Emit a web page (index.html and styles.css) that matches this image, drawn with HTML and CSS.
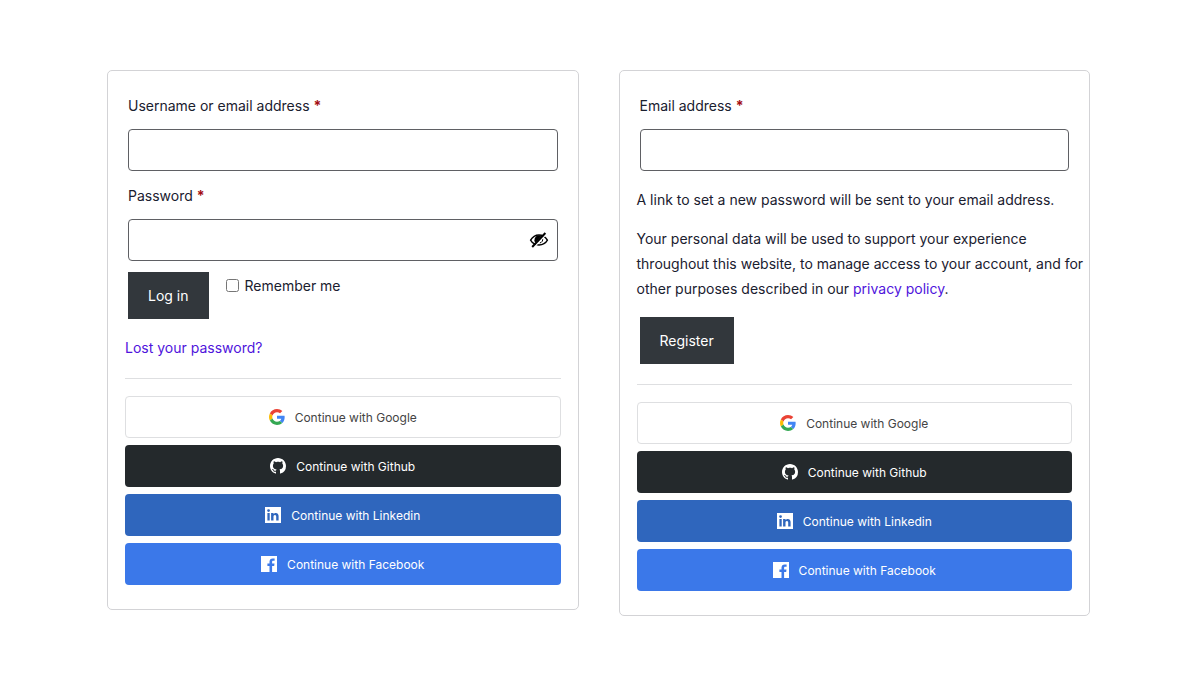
FILE: index.html
```html
<!DOCTYPE html>
<html lang="en">
<head>
    <meta charset="UTF-8">
    <meta name="viewport" content="width=device-width, initial-scale=1.0">
    <title>My account</title>
    <link rel="stylesheet" href="styles.css">
</head>
<body>
    <!-- Shared icons -->
    <svg class="icon-defs" aria-hidden="true">
        <symbol id="icon-google" viewBox="0 0 48 48">
            <path fill="#EA4335" d="M24 9.5c3.54 0 6.71 1.22 9.21 3.6l6.85-6.85C35.9 2.38 30.47 0 24 0 14.62 0 6.51 5.38 2.56 13.22l7.98 6.19C12.43 13.72 17.74 9.5 24 9.5z"/>
            <path fill="#4285F4" d="M46.98 24.55c0-1.57-.15-3.09-.38-4.55H24v9.02h12.94c-.58 2.96-2.26 5.48-4.78 7.18l7.73 6c4.51-4.18 7.09-10.36 7.09-17.65z"/>
            <path fill="#FBBC05" d="M10.53 28.59c-.48-1.45-.76-2.99-.76-4.59s.27-3.14.76-4.59l-7.98-6.19C.92 16.46 0 20.12 0 24c0 3.88.92 7.54 2.56 10.78l7.97-6.19z"/>
            <path fill="#34A853" d="M24 48c6.48 0 11.93-2.13 15.89-5.81l-7.73-6c-2.15 1.45-4.92 2.3-8.16 2.3-6.26 0-11.57-4.22-13.47-9.91l-7.98 6.19C6.51 42.62 14.62 48 24 48z"/>
        </symbol>
        <symbol id="icon-github" viewBox="0 0 16 16">
            <path fill="currentColor" d="M8 0C3.58 0 0 3.58 0 8c0 3.54 2.29 6.53 5.47 7.59.4.07.55-.17.55-.38 0-.19-.01-.82-.01-1.49-2.01.37-2.53-.49-2.69-.94-.09-.23-.48-.94-.82-1.13-.28-.15-.68-.52-.01-.53.63-.01 1.08.58 1.23.82.72 1.21 1.87.87 2.33.66.07-.52.28-.87.51-1.07-1.78-.2-3.64-.89-3.64-3.95 0-.87.31-1.59.82-2.15-.08-.2-.36-1.02.08-2.12 0 0 .67-.21 2.2.82.64-.18 1.32-.27 2-.27s1.36.09 2 .27c1.53-1.04 2.2-.82 2.2-.82.44 1.1.16 1.92.08 2.12.51.56.82 1.27.82 2.15 0 3.07-1.87 3.75-3.65 3.95.29.25.54.73.54 1.48 0 1.07-.01 1.93-.01 2.2 0 .21.15.46.55.38A8.01 8.01 0 0 0 16 8c0-4.42-3.58-8-8-8z"/>
        </symbol>
        <symbol id="icon-linkedin" viewBox="0 0 16 16">
            <path fill="currentColor" fill-rule="evenodd" d="M0 0h16v16H0zM2.4 6.1v7.5h2.3V6.1zM3.55 2.2a1.4 1.4 0 1 0 0 2.8 1.4 1.4 0 0 0 0-2.8zM6.1 6.1v7.5h2.4V9.8c0-1 .4-1.8 1.4-1.8s1.3.8 1.3 1.8v3.8h2.4V9.3c0-2.1-.8-3.4-2.8-3.4-1.2 0-1.9.6-2.3 1.2v-1z"/>
        </symbol>
        <symbol id="icon-facebook" viewBox="0 0 16 16">
            <path fill="currentColor" d="M0 0h16v16h-4.9V9.9h2.1l.3-2.5h-2.4V6c0-.7.2-1.2 1.2-1.2h1.3V2.5c-.2 0-1-.1-1.9-.1-1.9 0-3.2 1.2-3.2 3.3v1.7H6.4v2.5h2.1V16H0z"/>
        </symbol>
    </svg>

    <main class="account">
        <section class="card">
            <form>
                <div class="form-row">
                    <label for="username">Username or email address <span class="required">*</span></label>
                    <input type="text" class="input-text" id="username" name="username">
                </div>
                <div class="form-row">
                    <label for="password">Password <span class="required">*</span></label>
                    <div class="password-input">
                        <input type="password" class="input-text" id="password" name="password">
                        <button type="button" class="show-password" aria-label="Show password">
                            <svg viewBox="0 0 20 16" width="20" height="16">
                                <path fill="none" stroke="#000" stroke-width="1.4" d="M1.6 8.2C3.4 5 6.4 3 10 3s6.6 2 8.4 5.2C16.6 11.4 13.6 13 10 13s-6.6-1.6-8.4-4.8z"/>
                                <path fill="#000" d="M10 3.2a4.6 4.6 0 0 0-3.5 7.6l5.9-6.9A4.6 4.6 0 0 0 10 3.2z"/>
                                <path fill="none" stroke="#000" stroke-width="1" d="M13.6 6.5c.6 2-.8 4.2-2.8 4.5"/>
                                <path stroke="#fff" stroke-width="1.2" d="M4.8 15.5 17.5 2"/>
                                <path stroke="#000" stroke-width="2" d="M3.2 15 16.4 1"/>
                            </svg>
                        </button>
                    </div>
                </div>
                <div class="form-actions">
                    <button type="submit" class="button">Log in</button>
                    <label class="remember"><input type="checkbox" name="rememberme"> Remember me</label>
                </div>
                <p class="lost-password"><a href="#">Lost your password?</a></p>
            </form>
            <div class="social">
                <button type="button" class="social-btn google"><svg><use href="#icon-google"/></svg>Continue with Google</button>
                <button type="button" class="social-btn github"><svg><use href="#icon-github"/></svg>Continue with Github</button>
                <button type="button" class="social-btn linkedin"><svg><use href="#icon-linkedin"/></svg>Continue with Linkedin</button>
                <button type="button" class="social-btn facebook"><svg><use href="#icon-facebook"/></svg>Continue with Facebook</button>
            </div>
        </section>

        <section class="card">
            <form>
                <div class="form-row">
                    <label for="email">Email address <span class="required">*</span></label>
                    <input type="email" class="input-text" id="email" name="email">
                </div>
                <p class="note">A link to set a new password will be sent to your email address.</p>
                <p class="note">Your personal data will be used to support your experience throughout this website, to manage access to your account, and for other purposes described in our <a href="#">privacy policy</a>.</p>
                <div class="form-actions register">
                    <button type="submit" class="button">Register</button>
                </div>
            </form>
            <div class="social">
                <button type="button" class="social-btn google"><svg><use href="#icon-google"/></svg>Continue with Google</button>
                <button type="button" class="social-btn github"><svg><use href="#icon-github"/></svg>Continue with Github</button>
                <button type="button" class="social-btn linkedin"><svg><use href="#icon-linkedin"/></svg>Continue with Linkedin</button>
                <button type="button" class="social-btn facebook"><svg><use href="#icon-facebook"/></svg>Continue with Facebook</button>
            </div>
        </section>
    </main>
</body>
</html>
```
FILE: styles.css
```css
* {
    box-sizing: border-box;
}
body {
    margin: 0;
    background: #fff;
    color: #1a202f;
    font-family: Inter, "Liberation Sans", sans-serif;
    font-size: 14px;
    line-height: 25px;
}
a {
    color: #4f14dc;
    text-decoration: none;
}
button,
input {
    font-family: inherit;
}
button {
    cursor: pointer;
}
.icon-defs {
    display: none;
}
.account {
    display: grid;
    grid-template-columns: 1fr 1fr;
    gap: 40px;
    align-items: start;
    max-width: 1202px;
    margin: 0 auto;
    padding: 70px 110px 58px 107px;
}
.card {
    border: 1px solid #d3d3d6;
    border-radius: 5px;
    padding: 22px 17px 24px;
}

/* Fields */
.form-row {
    padding: 0 3px;
    margin-bottom: 12px;
}
.form-row label {
    display: block;
    margin-bottom: 11px;
}
.required {
    color: #a30d12;
    font-weight: 700;
}
.input-text {
    display: block;
    width: 100%;
    height: 42px;
    padding: 0 12px;
    border: 1px solid #5f6064;
    border-radius: 4px;
    background: #fff;
    font-size: 14px;
}
.password-input {
    position: relative;
}
.show-password {
    position: absolute;
    top: 13px;
    right: 9px;
    padding: 0;
    border: 0;
    background: none;
    line-height: 0;
}

/* Buttons */
.form-actions {
    display: flex;
    align-items: flex-start;
    gap: 17px;
    margin-top: -1px;
    padding: 0 3px;
}
.button {
    height: 47px;
    padding: 0 20px;
    border: 0;
    background: #32373c;
    color: #fff;
    font-size: 14px;
}
.remember {
    display: flex;
    align-items: center;
    gap: 6px;
    margin-top: 1px;
}
.remember input {
    width: 13px;
    height: 13px;
    margin: 0;
}
.lost-password {
    margin: 16px 0 18px;
}
.note {
    margin: 0 -14px 14px 0;
}
.form-row + .note {
    margin-top: 16px;
}
.register {
    margin: 16px 0 20px;
}

/* Social login */
.social {
    display: flex;
    flex-direction: column;
    gap: 7px;
    padding-top: 17px;
    border-top: 1px solid #dedfe1;
}
.social-btn {
    display: flex;
    align-items: center;
    justify-content: center;
    gap: 10px;
    height: 42px;
    border: 1px solid transparent;
    border-radius: 4px;
    color: #fff;
    font-size: 12px;
}
.social-btn svg {
    width: 16px;
    height: 16px;
}
.google {
    background: #fff;
    border-color: #dedfe1;
    color: #444;
}
.github {
    background: #24292c;
}
.linkedin {
    background: #2f66bd;
}
.facebook {
    background: #3b78e9;
}
```
